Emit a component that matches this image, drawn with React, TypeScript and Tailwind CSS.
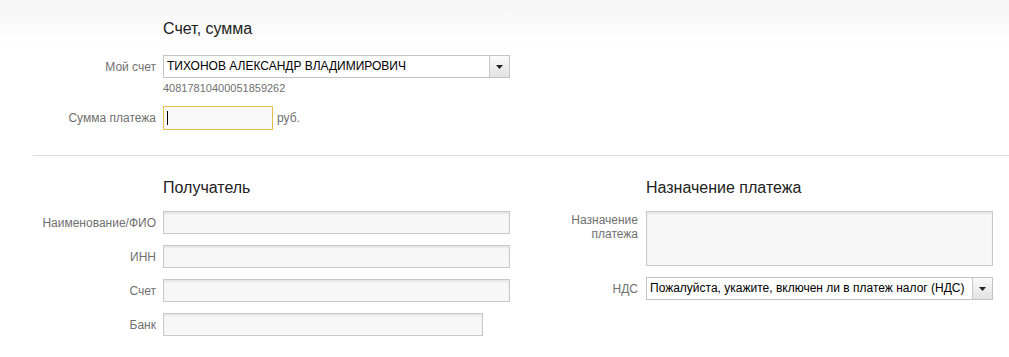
import React from 'react';

const font = { fontFamily: '"Liberation Sans", Arial, sans-serif' };

const inputCls =
    'h-[23px] border border-[#c9c9c9] bg-[#f7f7f7] shadow-[inset_0_2px_2px_rgba(0,0,0,0.07)]';

const Arrow = () => (
    <div className="w-[20px] h-full border-l border-[#c9c9c9] bg-[linear-gradient(to_bottom,#fbfbfb,#e2e2e2)] flex items-center justify-center">
        <svg width="7" height="4" viewBox="0 0 7 4">
            <path d="M0 0H7L3.5 4Z" fill="#222" />
        </svg>
    </div>
);

const Select = ({ value, width }: { value: string; width: string }) => (
    <div className={`${width} h-[23px] border border-[#c4c4c4] bg-white flex items-stretch`}>
        <div className="flex-1 pl-[3px] text-[12px] leading-[21px] text-black whitespace-nowrap overflow-hidden">{value}</div>
        <Arrow />
    </div>
);

const Label = ({ children, width }: { children: React.ReactNode; width: string }) => (
    <div className={`${width} shrink-0 text-right text-[12px] leading-[14px] text-[#707070]`}>{children}</div>
);

const Field = ({ label, inputWidth = 'w-[347px]' }: { label: string; inputWidth?: string }) => (
    <div className="flex items-center gap-[7px]">
        <Label width="w-[156px]">{label}</Label>
        <div className={`${inputWidth} ${inputCls}`} />
    </div>
);

export default function App() {
    return (
        <div style={font} className="w-[1009px] h-[357px] bg-[linear-gradient(to_bottom,#f5f5f5,#ffffff_45px)] overflow-hidden">
            <div className="pl-[163px] pt-[19px] text-[16px] leading-[20px] text-[#222]">Счет, сумма</div>

            <div className="mt-[16px] flex items-center gap-[7px]">
                <Label width="w-[156px]">Мой счет</Label>
                <Select value="ТИХОНОВ АЛЕКСАНДР ВЛАДИМИРОВИЧ" width="w-[347px]" />
            </div>
            <div className="pl-[163px] mt-[3px] text-[11px] leading-[14px] text-[#707070]">40817810400051859262</div>

            <div className="mt-[11px] flex items-center gap-[7px]">
                <Label width="w-[156px]">Сумма платежа</Label>
                <div className="w-[110px] h-[24px] border border-[#e6c04a] bg-[#f8f8f8] flex items-center pl-[3px]">
                    <div className="w-px h-[14px] bg-black" />
                </div>
                <span className="text-[12px] text-[#707070] -ml-[3px]">руб.</span>
            </div>

            <div className="ml-[33px] mt-[25px] h-px bg-[#dedede]" />

            <div className="flex">
                <div className="w-[520px] shrink-0">
                    <div className="pl-[163px] pt-[22px] text-[16px] leading-[20px] text-[#222]">Получатель</div>
                    <div className="mt-[13px] flex flex-col gap-[11px]">
                        <Field label="Наименование/ФИО" />
                        <Field label="ИНН" />
                        <Field label="Счет" />
                        <Field label="Банк" inputWidth="w-[320px]" />
                    </div>
                </div>
                <div className="flex-1">
                    <div className="pl-[126px] pt-[22px] text-[16px] leading-[20px] text-[#222]">Назначение платежа</div>
                    <div className="mt-[13px] flex flex-col gap-[11px]">
                        <div className="flex items-start gap-[8px]">
                            <Label width="w-[118px]">
                                <div className="pt-[2px]">Назначение<br />платежа</div>
                            </Label>
                            <div className="w-[347px] h-[55px] border border-[#c9c9c9] bg-[#f7f7f7] shadow-[inset_0_2px_2px_rgba(0,0,0,0.07)]" />
                        </div>
                        <div className="flex items-center gap-[8px]">
                            <Label width="w-[118px]">НДС</Label>
                            <Select value="Пожалуйста, укажите, включен ли в платеж налог (НДС)" width="w-[347px]" />
                        </div>
                    </div>
                </div>
            </div>
        </div>
    );
}
